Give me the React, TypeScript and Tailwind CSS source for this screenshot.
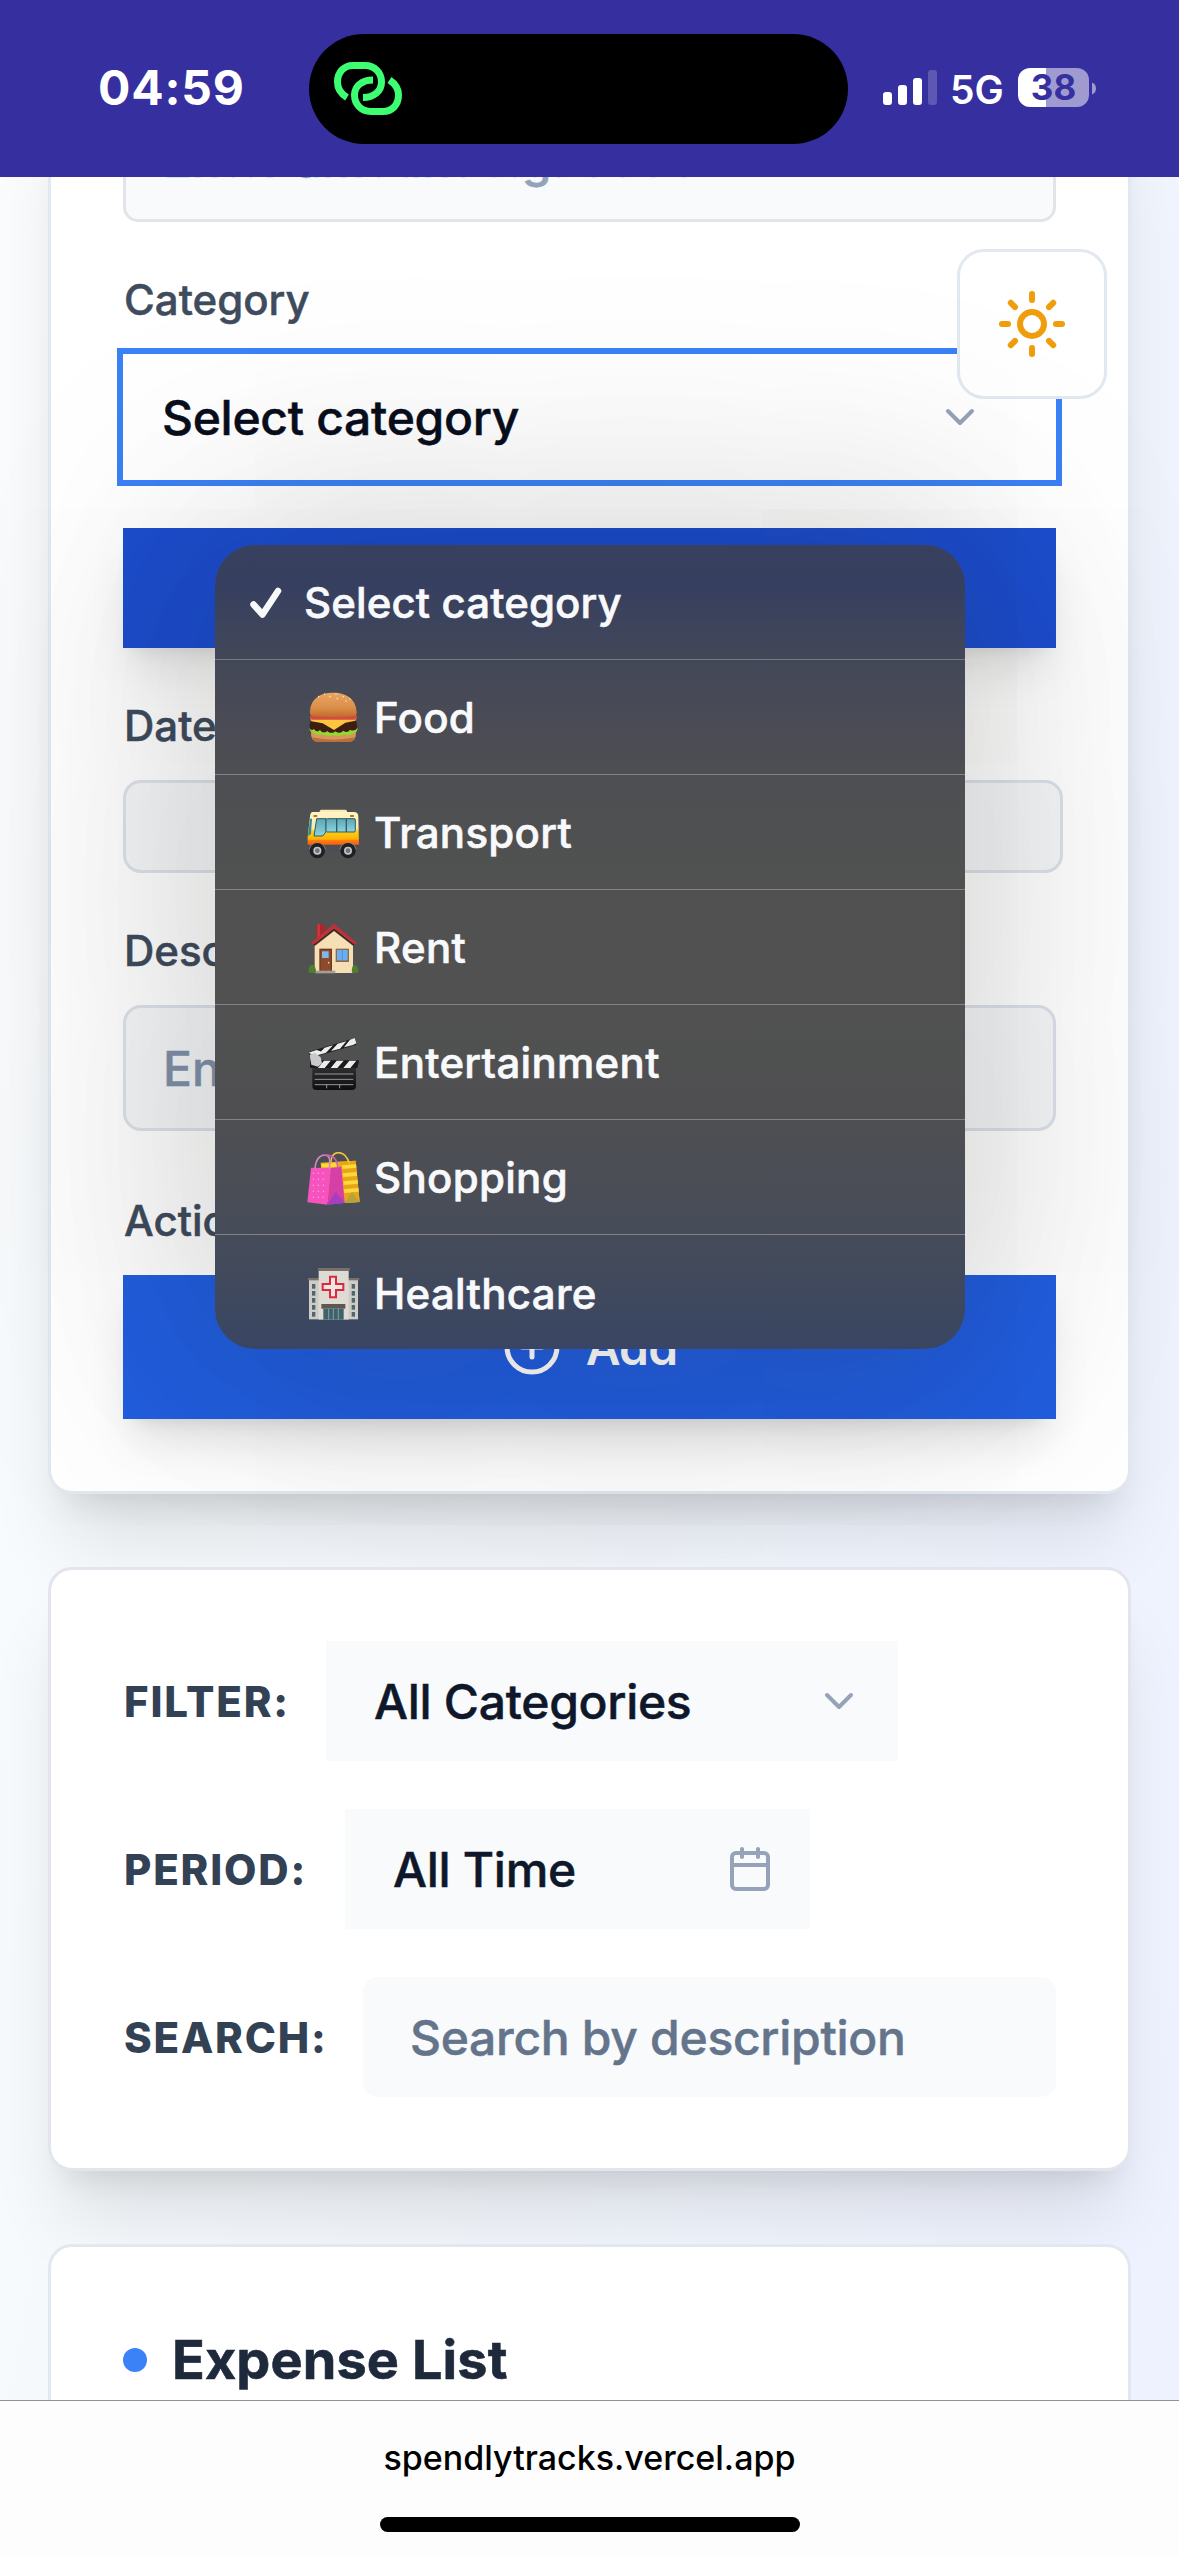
import type { ReactNode } from "react";
import { Calendar, ChevronDown, CirclePlus, Sun } from "lucide-react";

function Burger() {
  return (
    <svg width="54" height="54" viewBox="321 36 162 162">
      <defs>
        <linearGradient id="bun" x1="0" y1="0" x2="0" y2="1">
          <stop offset="0" stopColor="#e9a662" />
          <stop offset="0.6" stopColor="#dc8f4a" />
          <stop offset="1" stopColor="#c06c2c" />
        </linearGradient>
      </defs>
      <path d="M333 154H468Q470 186 446 186H354Q331 186 333 154Z" fill="#d8965a" />
      <path d="M336 172Q400 186 465 172Q462 186 446 186H354Q339 186 336 172Z" fill="#b8713a" />
      <rect x="329" y="116" width="142" height="42" rx="18" fill="#3d1e10" />
      <path d="M328 144Q334 154 342 147Q350 160 360 150Q370 164 382 153Q394 166 406 154Q418 165 430 152Q442 161 450 149Q462 156 473 144Q472 158 462 159Q448 168 432 163Q416 171 400 165Q380 170 366 163Q350 166 342 159Q330 158 328 144Z" fill="#8fdc30" />
      <path d="M330 112H471L466 122L436 128L402 150L368 130L334 124Z" fill="#ffc540" />
      <rect x="330" y="104" width="141" height="15" rx="7" fill="#d24d3f" />
      <path d="M330 101C329 60 356 38 400 38S471 62 470 101Q468 108 456 108Q400 114 344 108Q332 108 330 101Z" fill="url(#bun)" />
      <g fill="#fbe3b5">
        <circle cx="356" cy="50" r="2.4" />
        <circle cx="374" cy="42" r="2.4" />
        <circle cx="390" cy="50" r="2.4" />
        <circle cx="408" cy="42" r="2.4" />
        <circle cx="412" cy="56" r="2.4" />
        <circle cx="430" cy="50" r="2.4" />
        <circle cx="438" cy="63" r="2.4" />
        <circle cx="450" cy="57" r="2.4" />
      </g>
    </svg>
  );
}

function Bus() {
  return (
    <svg width="54" height="54" viewBox="321 381 162 162">
      <defs>
        <linearGradient id="busBody" x1="0" y1="0" x2="0" y2="1">
          <stop offset="0" stopColor="#fff3c9" />
          <stop offset="0.5" stopColor="#ffe9a0" />
          <stop offset="0.56" stopColor="#ffcf1c" />
          <stop offset="0.8" stopColor="#ffb400" />
          <stop offset="0.84" stopColor="#ff7a12" />
          <stop offset="1" stopColor="#f4560f" />
        </linearGradient>
        <linearGradient id="busGlass" x1="0" y1="0" x2="0" y2="1">
          <stop offset="0" stopColor="#5aa7b4" />
          <stop offset="1" stopColor="#8fd2dc" />
        </linearGradient>
      </defs>
      <rect x="359" y="389" width="82" height="12" rx="5" fill="#fbe9b4" />
      <path d="M338 396H462Q475 396 475 410L477 498H323V470L330 410Q331 396 338 396Z" fill="url(#busBody)" />
      <path d="M322 494H478V514H322Z" fill="#4b4e52" />
      <path d="M330 416H336L333 462L324 468Z" fill="#2f8a9b" />
      <path d="M350 416H378V456L368 468H342Z" fill="url(#busGlass)" stroke="#2a5d68" strokeWidth="3" />
      <rect x="378" y="416" width="88" height="40" rx="4" fill="url(#busGlass)" stroke="#2a5d68" strokeWidth="3" />
      <path d="M410 416V456M439 416V456" stroke="#2a5d68" strokeWidth="4" />
      <rect x="340" y="405" width="12" height="6" rx="2" fill="#b8741a" />
      <rect x="450" y="405" width="12" height="6" rx="2" fill="#b8741a" />
      <path d="M326 508A27 27 0 0 1 378 508ZM418 508A27 27 0 0 1 470 508Z" fill="#8b8f94" />
      {[352, 444].map((cx) => (
        <g key={cx}>
          <circle cx={cx} cy="512" r="23" fill="#1f2023" />
          <circle cx={cx} cy="512" r="12" fill="#c3c6ca" />
          <circle cx={cx} cy="512" r="7" fill="#6f7378" />
        </g>
      ))}
    </svg>
  );
}

function House() {
  return (
    <svg width="54" height="54" viewBox="321 726 162 162">
      <path d="M349 733H376V760L349 784Z" fill="#a52a2d" />
      <path d="M352 733H360V776L352 783Z" fill="#c8383a" />
      <path d="M344 790L402 742L459 790V879H344Z" fill="#f6dfb4" />
      <path d="M346 790L402 744L459 790V798L402 754L346 798Z" fill="#8d7350" opacity="0.6" />
      <path d="M333 789L402 731L471 789L464 794L402 745L340 794Z" fill="#c32f38" />
      <path d="M340 794L402 745L464 794L460 797L402 752L344 797Z" fill="#3c2422" />
      <rect x="358" y="806" width="38" height="70" fill="#6a3a22" />
      <rect x="362" y="810" width="30" height="62" fill="#8c4b2c" />
      <rect x="366" y="814" width="20" height="20" fill="#7fb6ee" />
      <circle cx="386" cy="848" r="2.5" fill="#f0d37a" />
      <rect x="407" y="806" width="40" height="40" fill="#8a6b4d" />
      <rect x="411" y="810" width="32" height="31" fill="#6aaef0" />
      <path d="M427 810V841" stroke="#4c84c2" strokeWidth="2" />
      <rect x="348" y="872" width="58" height="8" fill="#a39e98" />
      <path d="M326 878Q324 856 336 854Q348 856 348 878Z" fill="#4f7f2d" />
      <path d="M456 878Q454 856 464 854Q475 856 475 878Z" fill="#4f7f2d" />
    </svg>
  );
}

function Clapper() {
  return (
    <svg width="54" height="54" viewBox="321 51 162 162">
      <defs>
        <linearGradient id="slate" x1="0" y1="0" x2="0" y2="1">
          <stop offset="0" stopColor="#303033" />
          <stop offset="1" stopColor="#0d0d0f" />
        </linearGradient>
      </defs>
      <path d="M337 140H468V198Q468 210 456 210H349Q337 210 337 198Z" fill="url(#slate)" />
      <path d="M330 121H477L472 144H330Z" fill="#1a1a1c" />
      <path d="M354 144L372 122H392L374 144ZM392 144L410 122H431L412 144ZM430 144L448 122H469L451 144Z" fill="#ececec" />
      <path d="M325 96L464 54L469 74L331 114Z" fill="#1e1e20" />
      <path d="M325 98L350 90L376 99L346 107ZM374 83L399 76L378 98L352 105ZM413 71L439 64L420 86L393 93ZM450 59L464 54L469 70L459 75L432 82Z" fill="#ededed" />
      <path d="M329 104L345 98L362 112L366 130L354 140L334 134Z" fill="#c9c9cb" />
      <path d="M344 162H460M344 178H460M344 194H460" stroke="#aeb0b3" strokeWidth="2.5" />
      <path d="M380 194V205M419 194V205" stroke="#aeb0b3" strokeWidth="2.5" />
    </svg>
  );
}

function Bags() {
  return (
    <svg width="54" height="54" viewBox="321 396 162 162">
      <path d="M362 428L467 422L479 546L432 549L372 546Z" fill="#f3b41d" />
      <path d="M416 425L467 422L479 546L432 549Z" fill="#e9a51a" />
      <path d="M426 436L468 433L469 443L427 447ZM428 460L470 456L471 468L429 471ZM430 484L473 480L474 491L431 495ZM431 508L475 504L476 515L432 519Z" fill="#ffd93b" />
      <path d="M364 432L414 429V440L365 442Z" fill="#ffd93b" />
      <path d="M434 549L456 516L479 546Z" fill="#b6a33a" />
      <path d="M392 428C394 404 404 398 416 398S440 406 448 430" fill="none" stroke="#f4c33a" strokeWidth="5" />
      <path d="M333 443L392 444L382 554L322 547Z" fill="#f653bf" />
      <path d="M392 444L424 440L434 549L382 554Z" fill="#d53fa6" />
      <path d="M382 554L407 516L434 549Z" fill="#a53ec0" />
      <path d="M345 446C347 418 360 405 374 405S392 416 388 446" fill="none" stroke="#cf88c4" strokeWidth="5" />
      <path d="M374 406C396 402 412 416 413 442" fill="none" stroke="#c463ae" strokeWidth="5" />
      <g fill="#ff9fdd">
        {[460, 478, 496, 514, 532].map((y) =>
          [340, 355, 370].map((x) => <circle key={`${x}-${y}`} cx={x} cy={y} r="2.2" />),
        )}
      </g>
    </svg>
  );
}

function Hospital() {
  return (
    <svg width="54" height="54" viewBox="321 741 162 162">
      <rect x="327" y="779" width="31" height="119" fill="#cfccc6" />
      <rect x="444" y="779" width="30" height="119" fill="#cfccc6" />
      <rect x="324" y="774" width="34" height="7" fill="#77716a" />
      <rect x="443" y="774" width="35" height="7" fill="#77716a" />
      <rect x="356" y="752" width="90" height="147" fill="#dedad4" />
      <rect x="354" y="744" width="95" height="9" fill="#77716a" />
      <g fill="#4d6670">
        {[792, 813, 834, 855, 876].map((y) => (
          <g key={y}>
            <rect x="336" y={y} width="10" height="14" />
            <rect x="455" y={y} width="10" height="14" />
          </g>
        ))}
      </g>
      <path
        d="M390 770H408V792H430V810H408V832H390V810H368V792H390Z"
        fill="#efe6e2"
        stroke="#dc2a3c"
        strokeWidth="6"
      />
      <rect x="364" y="852" width="72" height="14" fill="#5d5852" />
      <rect x="370" y="866" width="61" height="33" fill="#3f626b" />
      <path d="M386 866V899M400 866V899M415 866V899" stroke="#7ea2aa" strokeWidth="3" />
    </svg>
  );
}

const options: { label: string; icon: ReactNode }[] = [
  { label: "Food", icon: <Burger /> },
  { label: "Transport", icon: <Bus /> },
  { label: "Rent", icon: <House /> },
  { label: "Entertainment", icon: <Clapper /> },
  { label: "Shopping", icon: <Bags /> },
  { label: "Healthcare", icon: <Hospital /> },
];

function StatusBar() {
  return (
    <header className="relative z-10 flex h-[177px] shrink-0 items-start bg-[#362fa0] text-white">
      <div className="w-[309px] shrink-0 pt-[58px] pl-[98px] text-[48px] leading-[60px] font-bold tracking-[0.8px]">
        04:59
      </div>
      <div className="mt-[34px] h-[110px] w-[539px] shrink-0 rounded-full bg-black pt-[25px] pl-[22px]">
        <svg width="74" height="58" viewBox="331 59 74 58" fill="none" stroke="#3dff72" strokeWidth="7">
          <path d="M347 97.5C340.500 93.500 337.500 88 337.500 82C337.500 72 344 65.500 353 65.500H365C375 65.500 381.500 73 381.500 82C381.500 91 374 97.500 363 97.500" />
          <path d="M389.500 80C395.500 84 398.500 89 398.500 95C398.500 105 392 111.500 383 111.500H371C361 111.500 354.500 104 354.500 95C354.500 86 362 80 373 80" />
        </svg>
      </div>
      <div className="mt-[68px] flex h-[39px] shrink-0 pl-[35px]">
        <div className="flex h-[37px] shrink-0 items-end gap-[6px]">
          <i className="h-[13px] w-[9px] rounded-[3px] bg-white" />
          <i className="h-[20px] w-[9px] rounded-[3px] bg-white" />
          <i className="h-[27px] w-[9px] rounded-[3px] bg-white" />
          <i className="h-[35px] w-[9px] rounded-[3px] bg-white/20" />
        </div>
        <div className="w-[81px] shrink-0 pl-[13px] text-[39px] leading-[43px] font-semibold">5G</div>
        <div className="flex h-[39px] w-[71px] shrink-0 items-center justify-center rounded-[12px] bg-[linear-gradient(90deg,#fff_28px,#9f9bd0_28px)] text-[35px] leading-[39px] font-bold text-[#362fa0]">
          38
        </div>
        <svg className="mt-[14px] ml-[3px] shrink-0" width="5" height="13" viewBox="0 0 5 13" fill="#9f9bd0">
          <path d="M0 0.500C5.300 2 5.300 11 0 12.500Z" />
        </svg>
      </div>
    </header>
  );
}

function Label({ children }: { children: ReactNode }) {
  return (
    <div className="h-[60px] pl-px text-[42px] leading-[60px] font-medium text-[#3f4c5e] [-webkit-text-stroke:0.5px]">
      {children}
    </div>
  );
}

function ExpenseForm() {
  return (
    <section className="-mt-[96px] shrink-0 rounded-[24px] border-[3px] border-[#e2e8f0] bg-white px-[72px] pt-[50px] pb-[72px] shadow-[0_60px_75px_-15px_rgba(0,0,0,0.1),0_24px_30px_-18px_rgba(0,0,0,0.1)]">
      <div className="h-[88px] rounded-[15px] border-[3px] border-[#e2e4e9] bg-[#f8fafc] pl-[37px] text-[48px] leading-[46px] font-medium tracking-[-0.2px] text-[#94a3b8] [-webkit-text-stroke:0.5px]">
        Enter amount e.g. 5000
      </div>
      <div className="mt-[48px]">
        <Label>Category</Label>
      </div>
      <div className="mt-[24px] flex h-[126px] items-center justify-between bg-white pr-[72px] pl-[39px] text-[48px] font-medium tracking-[-0.3px] text-[#0a0f1e] ring-[6px] ring-[#3b82f6]">
        <span className="mt-px [-webkit-text-stroke:0.5px]">Select category</span>
        <ChevronDown className="size-[48px] text-[#94a3b8]" />
      </div>
      <div className="mt-[48px] h-[120px] bg-[#1d4ecf] shadow-[0_30px_45px_-9px_rgba(0,0,0,0.1),0_12px_18px_-12px_rgba(0,0,0,0.1)]" />
      <div className="mt-[48px]">
        <Label>Date</Label>
      </div>
      <div className="mt-[24px] h-[93px] w-[940px] rounded-[18px] border-[3px] border-[#dde2ea] bg-[#f5f7f9]" />
      <div className="mt-[48px]">
        <Label>Description</Label>
      </div>
      <div className="mt-[24px] h-[126px] rounded-[18px] border-[3px] border-[#dde2ea] bg-[#f5f7f9] pl-[37px] text-[48px] leading-[121px] font-medium text-[#8292aa] [-webkit-text-stroke:0.5px]">
        Enter description
      </div>
      <div className="mt-[60px]">
        <Label>Actions</Label>
      </div>
      <div className="mt-[24px] flex h-[144px] items-center justify-center gap-[24px] bg-[#225edf] text-[48px] font-semibold tracking-[-0.8px] text-white shadow-[0_30px_45px_-9px_rgba(0,0,0,0.1),0_12px_18px_-12px_rgba(0,0,0,0.1)]">
        <CirclePlus className="size-[60px]" />
        <span className="mt-[2px]">Add</span>
      </div>
    </section>
  );
}

function Filters() {
  const label = "pt-px pl-px text-[42px] leading-[60px] font-extrabold tracking-[1.8px] text-[#334155]";
  const field = "flex h-[120px] items-center bg-[#f8fafc] text-[48px] font-medium tracking-[-0.3px] text-[#0f172a]";
  return (
    <section className="mt-[73px] flex shrink-0 flex-col gap-[48px] rounded-[24px] border-[3px] border-[#e2e6ec] bg-white px-[72px] py-[71px] shadow-[0_60px_75px_-15px_rgba(0,0,0,0.1),0_24px_30px_-18px_rgba(0,0,0,0.1)]">
      <div className="flex items-center">
        <div className={`${label} w-[203px]`}>FILTER:</div>
        <div className={`${field} w-[572px] justify-between pr-[35px] pl-[48px]`}>
          <span className="mt-[2px] [-webkit-text-stroke:0.5px]">All Categories</span>
          <ChevronDown className="size-[48px] text-[#94a3b8]" />
        </div>
      </div>
      <div className="flex items-center">
        <div className={`${label} w-[222px]`}>PERIOD:</div>
        <div className={`${field} w-[465px] justify-between pr-[36px] pl-[48px]`}>
          <span className="mt-[2px] [-webkit-text-stroke:0.5px]">All Time</span>
          <Calendar className="size-[48px] text-[#94a3b8]" />
        </div>
      </div>
      <div className="flex items-center">
        <div className={`${label} w-[240px]`}>SEARCH:</div>
        <div className="flex h-[120px] grow items-center rounded-[15px] bg-[#f8fafc] pl-[47px] text-[48px] font-medium tracking-[-0.3px] text-[#64748b]">
          <span className="mt-[2px] [-webkit-text-stroke:0.5px]">Search by description</span>
        </div>
      </div>
    </section>
  );
}

function CategoryMenu() {
  return (
    <div className="absolute top-[545px] left-[215px] w-[750px] rounded-[40px] shadow-[0_0_200px_rgba(18,16,0,0.12),0_10px_300px_60px_rgba(18,16,0,0.1)]">
      <ul className="h-[804px] overflow-hidden rounded-[40px] bg-[linear-gradient(180deg,#38405e_0px,#363f60_40px,#434858_115px,#4b4c54_190px,#4e4f52_235px,#505150_350px,#505150_470px,#4f4f52_570px,#494d57_660px,#424a5b_720px,#394563_804px)] text-[42px] leading-[60px] font-medium tracking-[0.3px] text-[#f8f9fb]">
        <li className="flex h-[115px] items-center border-b border-[#747a8a] pl-[33px]">
          <svg className="mr-[19px]" width="37" height="37" viewBox="0 0 37 37" fill="none" stroke="currentColor" strokeWidth="6.500" strokeLinecap="round" strokeLinejoin="round">
            <path d="M5.500 20.500L14.500 30.500L30 7" />
          </svg>
          <span className="mt-[2px] tracking-[0.1px] [-webkit-text-stroke:0.6px]">Select category</span>
        </li>
        {options.map((o) => (
          <li key={o.label} className="flex h-[115px] items-center border-b border-[#808388] pl-[92px] last:border-b-0">
            <span className="mt-[3px] mr-[13px] w-[54px]">{o.icon}</span>
            <span className="mt-[2px] [-webkit-text-stroke:0.6px]">{o.label}</span>
          </li>
        ))}
      </ul>
    </div>
  );
}

export default function App() {
  return (
    <div className="relative flex h-[2556px] w-[1179px] flex-col overflow-hidden bg-white font-['Inter',sans-serif]">
      <StatusBar />
      <main className="flex h-[2223px] shrink-0 flex-col overflow-hidden bg-[linear-gradient(100deg,#fafcfd_0%,#f3f7fc_50%,#eef2ff_100%)] px-[48px]">
        <ExpenseForm />
        <Filters />
        <section className="mt-[73px] h-[300px] shrink-0 rounded-[24px] border-[3px] border-[#e2e8f0] bg-white px-[72px] pt-[80px]">
          <h2 className="flex items-center gap-[25px] text-[54px] leading-[66px] font-bold tracking-[0.1px] text-[#1e293b] [-webkit-text-stroke:0.6px]">
            <span className="size-[24px] rounded-full bg-[#3b82f6]" />
            Expense List
          </h2>
        </section>
      </main>
      <footer className="relative z-10 flex h-[156px] shrink-0 flex-col items-center border-t-[1px] border-[#8f9296] bg-[#fdfdfd]">
        <div className="mt-[32px] text-[34px] leading-[50px] font-medium text-black">spendlytracks.vercel.app</div>
        <div className="mt-[34px] h-[15px] w-[420px] rounded-full bg-black" />
      </footer>
      <button className="absolute top-[249px] left-[957px] flex size-[150px] items-center justify-center rounded-[27px] border-[3px] border-[#e2e8f0] bg-white">
        <Sun className="size-[72px] text-[#f09d0c]" />
      </button>
      <CategoryMenu />
    </div>
  );
}
